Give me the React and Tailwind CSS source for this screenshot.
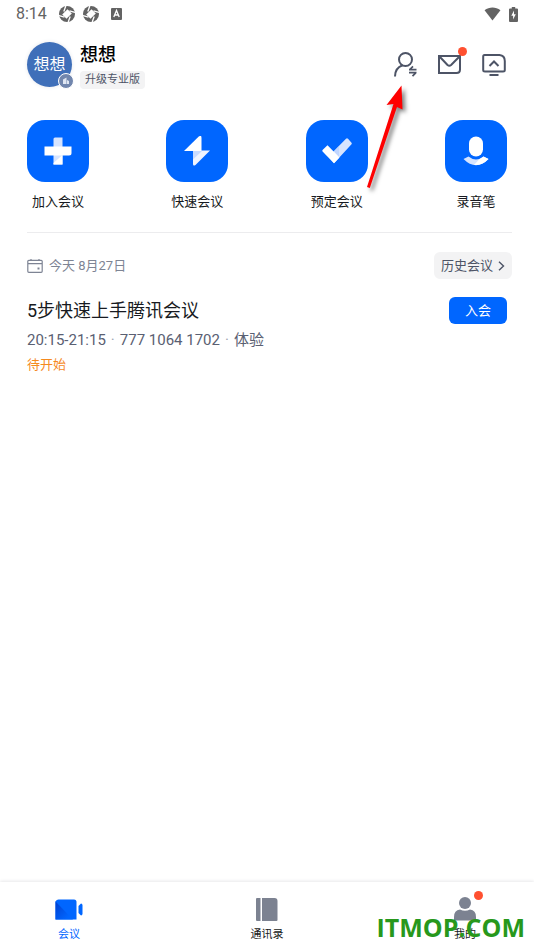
import React from "react";

const BLUE = "#0066ff";

// Status bar icons
const ApertureIcon = () => (
  <svg width="16" height="16" viewBox="0 0 16 16" aria-hidden="true">
    <circle cx="8" cy="8" r="8" fill="#636363" />
    <path d="M8.500 3.200 12.800 7.500 7.500 12.800 3.200 8.500z" fill="white" />
    <path d="M6.800 0 4.800 5.500M16 6.500 10.500 4.800M9.200 16l2-5.500M0 9.500l5.500 1.700" stroke="white" strokeWidth="1.300" />
  </svg>
);

const WifiIcon = () => (
  <svg width="17" height="14" viewBox="0 0 18 15" aria-hidden="true">
    <path d="M0.500 3.600C5.500-0.400 12.500-0.400 17.500 3.600L9 14.500z" fill="#636363" />
  </svg>
);

const BatteryIcon = () => (
  <svg width="9" height="15" viewBox="0 0 9 15" aria-hidden="true">
    <path d="M2.800 0h3.400v1.500H8q1 0 1 1V14q0 1-1 1H1q-1 0-1-1V2.500q0-1 1-1h1.800z" fill="#636363" />
    <path d="M5 3.500 2.300 8.800h1.800v3.700L6.800 7.300H5z" fill="white" />
  </svg>
);

// Header icons
const SwitchUserIcon = () => (
  <svg width="24" height="26" viewBox="0 0 24 26" fill="none" stroke="#4d5466" strokeWidth="2" aria-hidden="true">
    <circle cx="11.500" cy="7.500" r="6.500" />
    <path d="M1 24.500C1 18.500 4.500 14.800 8.500 13.300" />
    <path d="M15 17.600H22.500M19 14.300l-3 3M15 20.600H22.500M18.500 24.200l3-3" strokeWidth="1.700" />
  </svg>
);

const MailIcon = () => (
  <svg width="24" height="20" viewBox="0 0 24 20" fill="none" stroke="#4d5466" strokeWidth="2" aria-hidden="true">
    <path d="M1 1h21v13.500q0 3.500-3.500 3.500H1z" />
    <path d="M1.500 1.500l8 8.500q1.800 1.500 3.600 0L21.500 1.500" />
  </svg>
);

const ScreenIcon = () => (
  <svg width="24" height="23" viewBox="0 0 24 23" fill="none" stroke="#4d5466" strokeWidth="2" aria-hidden="true">
    <path d="M2.500 1H17.500Q22.800 1.500 22.800 7v9q0 1.500-1.800 1.500H3q-1.800 0-1.800-1.500V2.800q0-1.800 1.300-1.800z" />
    <path d="M7.500 12 12 7.500l4.500 4.500M7.500 21h9" />
  </svg>
);

// Action tile icons
const PlusIcon = () => (
  <svg width="28" height="28" viewBox="0 0 28 28" aria-hidden="true">
    <path d="M9.500 2q0-1.500 1.500-1.500h7.500V10h-9zM9.500 17h9v10.500h-9z" fill="#d6e4ff" />
    <path d="M9.500 27.500V26l9-8v9.500z" fill="white" />
    <path d="M0.500 9.500h27V16q0 2.500-2.500 2.500H0.500z" fill="white" />
  </svg>
);

const BoltIcon = () => (
  <svg width="28" height="30" viewBox="0 0 28 30" aria-hidden="true">
    <path d="M10 14.500h17L12.500 29q-2.500 1.500-2.500-1z" fill="#eff4ff" />
    <path d="M10 15h9L10 23.500z" fill="#c8dbff" />
    <path d="M1 15 15.500 0.700q3-2 3 1V15z" fill="white" />
  </svg>
);

const CheckIcon = () => (
  <svg width="30" height="26" viewBox="0 0 30 26" aria-hidden="true">
    <path d="M24 0.800q1-1 2 0l3.300 3.700q1 1 0 2L12 25.200 6.500 18.500z" fill="#d6e4ff" />
    <path d="M12 13.500 17 8.200V19.500z" fill="#c1d6ff" />
    <path d="M5.500 7.200 17.500 19.500 12 25.200 0.800 13.800q-1-1 0-2z" fill="white" />
  </svg>
);

const MicIcon = () => (
  <svg width="28" height="30" viewBox="0 0 28 30" aria-hidden="true">
    <rect x="7" y="0.500" width="14" height="20" rx="7" fill="white" />
    <path d="M1.500 23 6.500 20.500Q14 26.500 21.500 20.500L26.500 23Q14 35.500 1.500 23z" fill="#d6e4ff" />
    <path d="M12 29 17.500 23Q19.500 22.300 21.500 20.500L26.500 23Q20 29.800 12 29z" fill="white" />
  </svg>
);

const CalendarIcon = () => (
  <svg width="16" height="14" viewBox="0 0 16 14" fill="none" stroke="#7e8494" strokeWidth="1.200" aria-hidden="true">
    <rect x="0.800" y="1.300" width="14.400" height="12" rx="1" />
    <path d="M1 4.700h14M4 0v2M12 0v2" />
    <path d="M10.500 9.500h2" strokeWidth="2" />
  </svg>
);

// Tab bar icons
const CameraIcon = () => (
  <svg width="28" height="21" viewBox="0 0 28 21" aria-hidden="true">
    <defs>
      <linearGradient id="cameraFold" x1="0" y1="0" x2="1" y2="1">
        <stop offset="0" stopColor="#003fd0" />
        <stop offset="0.800" stopColor={BLUE} />
      </linearGradient>
    </defs>
    <path d="M0.500 2.500Q1.500 0.500 3.500 0.500H19q2.500 0 2.500 2.500v17.500h-21z" fill={BLUE} />
    <path d="M0.500 2.500 18 20.500H0.500z" fill="url(#cameraFold)" />
    <path d="M23.500 7 26 4.500q1.500 0 1.500 2v8q0 2-1.500 2l-2.500-2.500z" fill={BLUE} />
  </svg>
);

const BookIcon = () => (
  <svg width="22" height="23" viewBox="0 0 22 23" fill="#7c8291" aria-hidden="true">
    <path d="M1 0h3.500v23H1q-1 0-1-1V1q0-1 1-1zM6 0h12.500q3 0 3 3v19q0 1-1 1H6z" />
  </svg>
);

const PersonIcon = () => (
  <svg width="22" height="24" viewBox="0 0 22 24" fill="#7c8291" aria-hidden="true">
    <circle cx="11" cy="6" r="6" />
    <path d="M0 23.500V20q0-7 6-7.500 5 2.600 10 0 6 .5 6 7.500v3.500z" />
  </svg>
);

const actions = [
  { label: "加入会议", icon: <PlusIcon /> },
  { label: "快速会议", icon: <BoltIcon /> },
  { label: "预定会议", icon: <CheckIcon /> },
  { label: "录音笔", icon: <MicIcon /> },
];

const tabs = [
  { label: "会议", icon: <CameraIcon />, active: true },
  { label: "通讯录", icon: <BookIcon /> },
  { label: "我的", icon: <PersonIcon />, badge: true },
];

const StatusBar = () => (
  <div className="flex h-7 items-center justify-between px-4 text-[#636363]">
    <div className="flex items-center gap-2">
      <span className="mr-1 text-base">8:14</span>
      <ApertureIcon />
      <ApertureIcon />
      <svg className="ml-1" width="11" height="12" viewBox="0 0 11 12" fill="none" aria-hidden="true">
        <rect width="11" height="12" rx="1" fill="#636363" />
        <path d="M2.800 9 5.500 2.500 8.200 9M3.700 7h3.600" stroke="white" strokeWidth="1.300" />
      </svg>
    </div>
    <div className="flex items-center gap-2">
      <WifiIcon />
      <BatteryIcon />
    </div>
  </div>
);

const Header = () => (
  <header className="flex items-start justify-between pl-[27px] pr-7 pt-3.5">
    <div className="flex gap-2">
      <div className="relative flex h-[45px] w-[45px] items-center justify-center rounded-full bg-[#3f6fb9] text-base text-white shadow-[0_0_4px_#e5e7eb]">
        想想
        <span className="absolute -bottom-0.5 -right-0.5 flex h-4 w-4 items-center justify-center rounded-full border border-white bg-[#7186ad]">
          <svg width="8" height="8" viewBox="0 0 8 8" fill="#dfe6f2" aria-hidden="true">
            <path d="M1 2.500 4.500 0.500V7H1zM5 3l2 1v3H5z" />
          </svg>
        </span>
      </div>
      <div className="flex flex-col items-start">
        <h1 className="text-lg font-medium leading-[26px] text-black">想想</h1>
        <button className="mt-[3px] rounded bg-[#f3f3f4] px-[5px] text-[11px] leading-[18px] text-[#4d5466]">
          升级专业版
        </button>
      </div>
    </div>
    <div className="flex items-center gap-5 pt-2.5">
      <button aria-label="切换账号">
        <SwitchUserIcon />
      </button>
      <button className="relative" aria-label="消息">
        <MailIcon />
        <span className="absolute -right-[5px] -top-2 h-[9px] w-[9px] rounded-full bg-[#ff5030]" />
      </button>
      <button aria-label="投屏">
        <ScreenIcon />
      </button>
    </div>
  </header>
);

const App = () => {
  return (
    <div className="relative flex min-h-screen flex-col bg-white font-['Roboto','Noto_Sans_CJK_SC',sans-serif]">
      <StatusBar />
      <Header />

      {/* Quick actions */}
      <div className="mt-[31px] flex justify-between px-[27px]">
        {actions.map((action) => (
          <button key={action.label} className="flex flex-col items-center">
            <span className="flex h-[62px] w-[62px] items-center justify-center rounded-[18px] bg-[#0066ff]">
              {action.icon}
            </span>
            <span className="mt-2.5 text-[13px] leading-5 text-[#171a21]">{action.label}</span>
          </button>
        ))}
      </div>

      {/* Meeting list */}
      <main className="ml-[27px] mr-[22px] mt-5 grow border-t border-[#ececee]">
        <div className="mt-[19px] flex items-center justify-between">
          <div className="flex items-center gap-1.5 text-[13px] text-[#7e8494]">
            <CalendarIcon />
            <span>今天 8月27日</span>
          </div>
          <button className="flex h-[27px] items-center gap-[5px] rounded-md bg-[#f3f3f4] px-[7px] text-[13px] text-[#4d5466]">
            历史会议
            <svg width="7" height="10" viewBox="0 0 7 10" fill="none" stroke="#4d5466" strokeWidth="1.400" aria-hidden="true">
              <path d="M1 0.800 5.500 5 1 9.200" />
            </svg>
          </button>
        </div>

        <div className="mt-[18px] flex items-start justify-between pr-[5px]">
          <div>
            <h2 className="text-lg leading-7 text-[#171a21]">5步快速上手腾讯会议</h2>
            <p className="flex gap-[5px] text-[15px] leading-[30px] text-[#5a6072]">
              <span>20:15-21:15</span>
              <span className="text-[#a0a5b2]">·</span>
              <span>777 1064 1702</span>
              <span className="text-[#a0a5b2]">·</span>
              <span>体验</span>
            </p>
            <p className="text-[13px] leading-5 text-[#f58a1f]">待开始</p>
          </div>
          <button className="h-[27px] w-[58px] rounded-md bg-[#0066ff] text-[13px] text-white">入会</button>
        </div>
      </main>

      {/* Bottom tabs */}
      <nav className="flex h-[68px] justify-between px-12 shadow-[0_-1px_3px_#e8e8ea]">
        {tabs.map((tab) => (
          <button key={tab.label} className="relative flex w-[42px] flex-col items-center pt-[13px]">
            <span className="flex h-7 items-center">{tab.icon}</span>
            <span className={`mt-0.5 text-[11px] leading-5 ${tab.active ? "text-[#0066ff]" : "text-[#171a21]"}`}>
              {tab.label}
            </span>
            {tab.badge && <span className="absolute right-[3px] top-[9px] h-[9px] w-[9px] rounded-full bg-[#ff5030]" />}
          </button>
        ))}
      </nav>

      {/* Annotation arrow */}
      <svg
        className="pointer-events-none absolute left-[360px] top-[80px] drop-shadow-[3px_3px_2px_rgba(0,0,0,0.5)]"
        width="50"
        height="112"
        viewBox="0 0 50 112"
        fill="#fe0000"
        aria-hidden="true"
      >
        <path d="M41.500 5.500 42.500 29.500 37 27 9.800 108 7 107 33.500 24 26.500 25z" />
      </svg>

      <span className="pointer-events-none absolute bottom-[5px] right-[9px] font-['Open_Sans',sans-serif] text-[25px] font-bold leading-9 text-[#27981c]">
        ITMOP.COM
      </span>
    </div>
  );
};

export default App;
